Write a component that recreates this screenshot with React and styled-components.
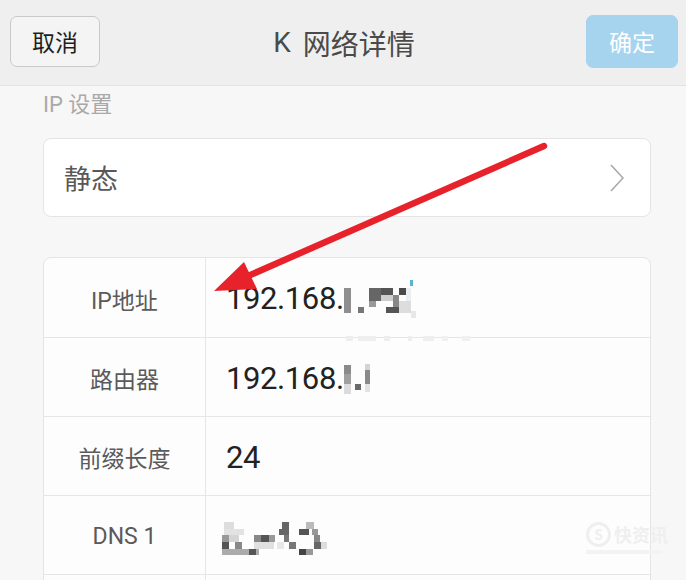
import React from "react";
import styled, { createGlobalStyle } from "styled-components";

const GlobalStyle = createGlobalStyle`
  html, body { margin: 0; padding: 0; overflow: hidden; }
  body {
    background: #f7f7f7;
    font-family: Roboto, "Noto Sans CJK SC", sans-serif;
  }
  * { box-sizing: border-box; }
`;

const Page = styled.div`
  position: relative;
  width: 686px;
  height: 580px;
  overflow: hidden;
  background: #f7f7f7;
`;

const Header = styled.header`
  height: 86px;
  padding: 0 8px 3px 10px;
  display: grid;
  grid-template-columns: 1fr auto 1fr;
  align-items: center;
  background: #efefef;
  border-bottom: 1px solid #e2e2e2;
`;

const Button = styled.button`
  justify-self: ${(p) => (p.$primary ? "end" : "start")};
  width: ${(p) => (p.$primary ? "92px" : "90px")};
  height: ${(p) => (p.$primary ? "53px" : "51px")};
  border-radius: 7px;
  border: 1px solid ${(p) => (p.$primary ? "#a6d4ef" : "#c9c9c9")};
  background: ${(p) => (p.$primary ? "#a6d4ef" : "#f4f4f4")};
  color: ${(p) => (p.$primary ? "#ffffff" : "#1e1e1e")};
  font-family: "Noto Sans CJK SC", sans-serif;
  font-size: 23px;
  padding: 0;
`;

const Title = styled.h1`
  margin: 0;
  font-weight: 400;
  font-size: 28px;
  color: #4a4a4a;
  display: flex;
  align-items: center;
  gap: 12px;
  padding-top: 3px;
`;

const Body = styled.main`
  padding: 0 35px 0 43px;
`;

const SectionLabel = styled.div`
  margin: 4px 0 18px;
  line-height: 30px;
  font-size: 22px;
  color: #a9a9a9;
`;

const Card = styled.div`
  height: 79px;
  background: #ffffff;
  border: 1px solid #e4e4e4;
  border-radius: 8px;
  padding: 0 26px 0 20px;
  display: flex;
  align-items: center;
  justify-content: space-between;
  font-family: "Noto Sans CJK SC", sans-serif;
  font-size: 27px;
  color: #585858;
`;

const Table = styled.div`
  margin-top: 40px;
  background: #fdfdfd;
  border: 1px solid #e4e4e4;
  border-radius: 8px;
`;

const Row = styled.div`
  display: grid;
  grid-template-columns: 162px 1fr;
  min-height: 79px;
  border-bottom: 1px solid #e6e6e6;
  &:first-child { min-height: 80px; }
`;

const Label = styled.div`
  display: flex;
  align-items: center;
  justify-content: center;
  border-right: 1px solid #e6e6e6;
  font-size: 23px;
  color: #5a5a5a;
  padding-top: 2px;
`;

const Value = styled.div`
  display: flex;
  align-items: center;
  padding-left: 20px;
  font-size: 31px;
  letter-spacing: -0.4px;
  color: #222222;
  padding-top: 2px;
`;

const MosaicSvg = styled.svg`
  display: block;
  overflow: visible;
  margin-left: ${(p) => p.$shift || 0}px;
`;

const Overlay = styled.svg`
  position: absolute;
  left: 0;
  top: 0;
  pointer-events: none;
`;

const Watermark = styled.div`
  position: absolute;
  left: 586px;
  top: 521px;
  display: flex;
  flex-direction: column;
  align-items: flex-start;
  gap: 3px;
  color: #efefef;
  pointer-events: none;
`;

const WatermarkTop = styled.div`
  display: flex;
  align-items: center;
  gap: 3px;
  font-family: "Noto Sans CJK SC", sans-serif;
  font-size: 18px;
  font-weight: 700;
`;

const WatermarkBadge = styled.span`
  width: 25px;
  height: 25px;
  border-radius: 50%;
  border: 3px solid #efefef;
  display: flex;
  align-items: center;
  justify-content: center;
  font-size: 14px;
`;

const WatermarkLine = styled.div`
  width: 76px;
  height: 4px;
  background: #f3f3f3;
`;

function Mosaic({ cells, width, height, shift }) {
  return (
    <MosaicSvg width={width} height={height} $shift={shift} viewBox={`0 0 ${width} ${height}`}>
      {cells.map(([x, y, w, h, c], i) => (
        <rect key={i} x={x} y={y} width={w} height={h} fill={c} />
      ))}
    </MosaicSvg>
  );
}

const ipCells = [
  [0, 9, 7, 25, "#8f8f8f"],
  [14, 28, 6, 6, "#777"],
  [25, 9, 12, 13, "#666"],
  [25, 22, 7, 6, "#999"],
  [37, 9, 12, 7, "#555"],
  [37, 16, 12, 6, "#cfcfcf"],
  [42, 28, 13, 6, "#555"],
  [49, 16, 6, 12, "#888"],
  [55, 9, 7, 7, "#4a4a4a"],
  [55, 22, 12, 12, "#ddd"],
  [62, 9, 5, 13, "#e8eef1"],
  [66, 1, 3, 6, "#5ab4d0"],
  [67, 32, 5, 7, "#e3e8eb"],
  [2, 57, 7, 5, "#eeeeee"],
  [14, 57, 18, 5, "#efefef"],
  [40, 57, 6, 5, "#eeeeee"],
  [64, 57, 4, 5, "#eeeeee"],
  [79, 57, 11, 5, "#efefef"],
  [98, 57, 6, 5, "#f0f0f0"],
  [118, 57, 8, 5, "#f0f0f0"],
];

const routerCells = [
  [0, 7, 7, 9, "#8a8a8a"],
  [0, 16, 7, 10, "#a0a0a0"],
  [0, 26, 7, 10, "#dcdcdc"],
  [11, 26, 6, 6, "#6a6a6a"],
  [21, 6, 5, 6, "#d4d4d4"],
  [21, 12, 5, 14, "#8a8a8a"],
  [21, 26, 5, 8, "#e2e2e2"],
];

const dnsCells = [
  [2, 6, 10, 7, "#dddddd"],
  [60, 6, 7, 7, "#666"],
  [84, 6, 8, 7, "#bbb"],
  [2, 13, 20, 6, "#e2e2e2"],
  [57, 13, 10, 6, "#666"],
  [77, 13, 10, 6, "#555"],
  [90, 13, 6, 6, "#999"],
  [0, 19, 7, 7, "#999"],
  [7, 19, 10, 7, "#d5d5d5"],
  [32, 19, 7, 7, "#888"],
  [39, 19, 8, 7, "#555"],
  [47, 19, 6, 7, "#999"],
  [62, 19, 5, 7, "#777"],
  [92, 19, 6, 7, "#888"],
  [0, 26, 7, 7, "#555"],
  [13, 26, 7, 7, "#888"],
  [32, 26, 20, 7, "#e0e0e0"],
  [55, 26, 7, 7, "#e8e8e8"],
  [67, 26, 7, 7, "#777"],
  [92, 26, 7, 7, "#666"],
  [99, 26, 6, 7, "#dddddd"],
  [0, 33, 37, 6, "#ababab"],
  [27, 33, 7, 6, "#555"],
  [77, 33, 7, 6, "#444"],
  [84, 33, 7, 6, "#999"],
];

const rows = [
  { id: "ip", label: "IP地址", text: "192.168.", cells: ipCells },
  { id: "gw", label: "路由器", text: "192.168.", cells: routerCells },
  { id: "prefix", label: "前缀长度", text: "24" },
  { id: "dns1", label: "DNS 1", text: "", cells: dnsCells, shift: -4 },
  { id: "dns2", label: "", text: "" },
];

function Chevron() {
  return (
    <svg width="14" height="28" viewBox="0 0 14 28">
      <polyline points="1,1 13,14 1,27" fill="none" stroke="#a8a8a8" strokeWidth="1.6" />
    </svg>
  );
}

export default function App() {
  return (
    <>
      <GlobalStyle />
      <Page>
        <Header>
          <Button>取消</Button>
          <Title>
            <span>K</span>
            <span>网络详情</span>
          </Title>
          <Button $primary>确定</Button>
        </Header>
        <Body>
          <SectionLabel>IP 设置</SectionLabel>
          <Card>
            <span>静态</span>
            <Chevron />
          </Card>
          <Table>
            {rows.map((r) => (
              <Row key={r.id}>
                <Label>{r.label}</Label>
                <Value>
                  {r.text}
                  {r.cells && <Mosaic cells={r.cells} width={110} height={40} shift={r.shift} />}
                </Value>
              </Row>
            ))}
          </Table>
        </Body>
        <Watermark>
          <WatermarkTop>
            <WatermarkBadge>S</WatermarkBadge>
            <span>快资讯</span>
          </WatermarkTop>
          <WatermarkLine />
        </Watermark>
        <Overlay width="686" height="580" viewBox="0 0 686 580">
          <line x1="544" y1="146" x2="248" y2="276" stroke="#e8222b" strokeWidth="6.5" strokeLinecap="round" />
          <polygon points="214,291 244,262 257,289" fill="#e8222b" />
        </Overlay>
      </Page>
    </>
  );
}
